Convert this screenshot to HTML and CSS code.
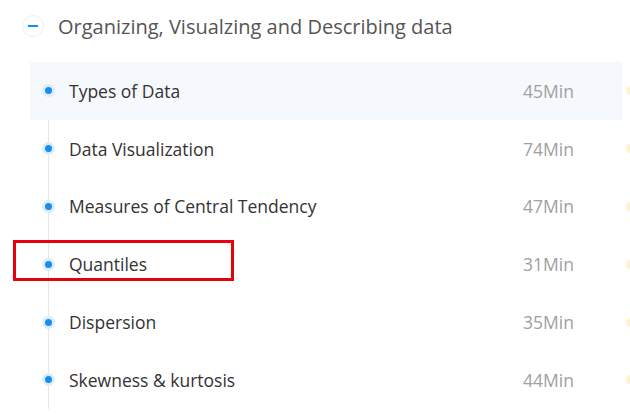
FILE: index.html
```html
<!DOCTYPE html>
<html lang="en">

<head>
    <meta charset="UTF-8">
    <meta name="viewport" content="width=device-width, initial-scale=1.0">
    <title>Chapter lessons</title>
    <link rel="stylesheet" href="styles.css">
</head>

<body>
    <div class="chapter">
        <div class="chapter-head">
            <span class="toggle"><i></i></span>
            <h2>Organizing, Visualzing and Describing data</h2>
        </div>
        <ul class="lessons">
            <li class="active">
                <div class="lesson"><span class="dot"></span><span class="name">Types of Data</span><span class="time">45Min</span></div>
                <span class="badge"></span>
            </li>
            <li>
                <div class="lesson"><span class="dot"></span><span class="name">Data Visualization</span><span class="time">74Min</span></div>
                <span class="badge"></span>
            </li>
            <li>
                <div class="lesson"><span class="dot"></span><span class="name">Measures of Central Tendency</span><span class="time">47Min</span></div>
                <span class="badge"></span>
            </li>
            <li class="marked">
                <div class="lesson"><span class="dot"></span><span class="name">Quantiles</span><span class="time">31Min</span></div>
                <span class="badge"></span>
                <span class="mark-box"></span>
            </li>
            <li>
                <div class="lesson"><span class="dot"></span><span class="name">Dispersion</span><span class="time">35Min</span></div>
                <span class="badge"></span>
            </li>
            <li>
                <div class="lesson"><span class="dot"></span><span class="name">Skewness &amp; kurtosis</span><span class="time">44Min</span></div>
                <span class="badge"></span>
            </li>
        </ul>
    </div>
</body>

</html>
```

FILE: styles.css
```css
* {
    margin: 0;
    padding: 0;
    box-sizing: border-box;
}

html,
body {
    height: 100%;
    overflow: hidden;
    background-color: #fff;
    font-family: "Open Sans", "Noto Sans", sans-serif;
}

ul {
    list-style: none;
}

.chapter-head {
    display: flex;
    align-items: center;
    height: 52px;
    padding-left: 22px;
}

.toggle {
    display: flex;
    align-items: center;
    justify-content: center;
    width: 22px;
    height: 22px;
    border: 1px solid #e8f0f8;
    border-radius: 50%;
    margin-right: 14px;
}

.toggle i {
    display: block;
    width: 10px;
    height: 2px;
    background-color: #1a8ceb;
}

.chapter-head h2 {
    font-size: 20px;
    font-weight: normal;
    color: #555;
}

.lessons {
    position: relative;
    margin-top: 10px;
}

.lessons::before {
    content: "";
    position: absolute;
    left: 48px;
    top: 32px;
    bottom: 0;
    width: 1px;
    background-color: #e6e6e6;
}

.lessons li {
    position: relative;
    display: flex;
    align-items: center;
    height: 57.8px;
    margin-left: 30px;
}

.lesson {
    flex: none;
    display: flex;
    align-items: center;
    width: 592px;
    height: 100%;
    padding-left: 15px;
}

.active .lesson {
    background-color: #f5f9fd;
}

.dot {
    position: relative;
    z-index: 1;
    width: 7px;
    height: 7px;
    border-radius: 50%;
    background-color: #1a8ceb;
    box-shadow: 0 0 0 3px #dcecfb;
    margin-right: 17px;
}

.name {
    flex: 1;
    font-size: 17.5px;
    color: #333;
}

.time {
    width: 99px;
    font-size: 17.5px;
    color: #a0a0a0;
}

.badge {
    flex: none;
    width: 4px;
    height: 9px;
    margin-left: 4px;
    border-radius: 5px 0 0 5px;
    background-color: #fcf3d0;
}

.mark-box {
    position: absolute;
    left: -17px;
    top: 4.6px;
    width: 221px;
    height: 41px;
    border: 3px solid #e8000d;
}
```
